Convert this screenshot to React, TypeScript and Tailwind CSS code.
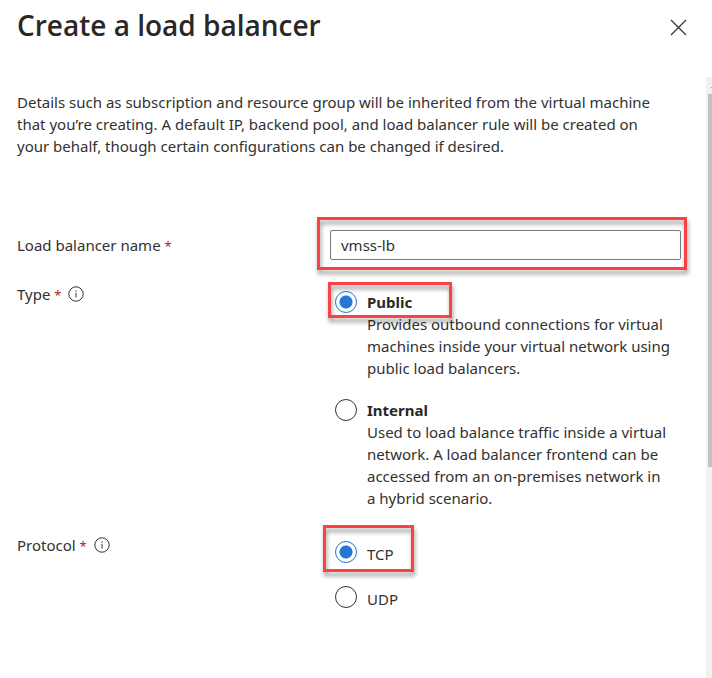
import React, { useState } from 'react';

interface Option {
  value: string;
  title: string;
  lines?: string[];
}

const types: Option[] = [
  {
    value: 'public',
    title: 'Public',
    lines: [
      'Provides outbound connections for virtual',
      'machines inside your virtual network using',
      'public load balancers.',
    ],
  },
  {
    value: 'internal',
    title: 'Internal',
    lines: [
      'Used to load balance traffic inside a virtual',
      'network. A load balancer frontend can be',
      'accessed from an on-premises network in',
      'a hybrid scenario.',
    ],
  },
];

const protocols: Option[] = [
  { value: 'tcp', title: 'TCP' },
  { value: 'udp', title: 'UDP' },
];

const radioClass =
  'size-[22px] shrink-0 appearance-none rounded-full border border-[#323130] bg-white checked:border-[#1f77d0] checked:bg-[radial-gradient(circle,#2678d4_6px,transparent_7px)]';

const Required: React.FC = () => <span className="text-[13px] text-[#a4262c]">*</span>;

const InfoIcon: React.FC = () => (
  <svg width="16" height="16" viewBox="0 0 16 16" fill="none" aria-hidden="true">
    <circle cx="8" cy="8" r="7.2" stroke="#323130" strokeWidth="1" />
    <path d="M8 6.8v4.7" stroke="#323130" strokeWidth="1" />
    <circle cx="8" cy="5" r="0.7" fill="#323130" />
  </svg>
);

// Red callout frame drawn over the control it surrounds
const Callout: React.FC<{ className: string }> = ({ className }) => (
  <div
    className={`pointer-events-none absolute border-3 border-[#fa4144] drop-shadow-[1px_4px_2px_rgba(0,0,0,0.4)] ${className}`}
  />
);

const App: React.FC = () => {
  const [name, setName] = useState('vmss-lb');
  const [type, setType] = useState('public');
  const [protocol, setProtocol] = useState('tcp');

  return (
    <div className="flex min-h-screen flex-col bg-white font-['Noto_Sans','Segoe_UI',sans-serif] text-[15px] leading-[22px] text-[#323130]">
      <header className="flex h-[77px] items-start justify-between pl-[17px] pr-[25px]">
        <h1 className="pt-[3px] font-['Open_Sans','Segoe_UI',sans-serif] text-[28px] leading-[44px] font-semibold text-[#292827]">
          Create a load balancer
        </h1>
        <button type="button" aria-label="Close" className="mt-[19px]">
          <svg width="17" height="17" viewBox="0 0 17 17" fill="none" aria-hidden="true">
            <path d="M1 1l15 15M16 1L1 16" stroke="#323130" strokeWidth="1.2" />
          </svg>
        </button>
      </header>

      <div className="flex flex-1">
        <main className="flex-1 pt-[14px] pr-[25px] pl-[17px]">
          <p>
            Details such as subscription and resource group will be inherited from the virtual machine
            <br />
            that you’re creating. A default IP, backend pool, and load balancer rule will be created on
            <br />
            your behalf, though certain configurations can be changed if desired.
          </p>

          <form className="mt-[73px]">
            <div className="grid grid-cols-[313px_1fr] items-center">
              <label htmlFor="lb-name">
                Load balancer name <Required />
              </label>
              <div className="relative">
                <input
                  id="lb-name"
                  type="text"
                  value={name}
                  onChange={(e) => setName(e.target.value)}
                  className="block h-[30px] w-full rounded-xs border border-[#7a7876] px-[10px] outline-none"
                />
                <Callout className="-top-[13px] -right-[6px] -bottom-[10px] -left-[13px]" />
              </div>
            </div>

            <div role="radiogroup" aria-labelledby="type-label" className="mt-[23px] grid grid-cols-[313px_1fr]">
              <div id="type-label" className="flex h-[22px] items-center gap-[7px]">
                <span>
                  Type <Required />
                </span>
                <InfoIcon />
              </div>
              <div className="flex flex-col gap-5 pt-2 pl-[5px]">
                {types.map((option) => (
                  <label key={option.value} className="relative flex items-start gap-[10px]">
                    <input
                      type="radio"
                      name="type"
                      value={option.value}
                      checked={type === option.value}
                      onChange={() => setType(option.value)}
                      className={radioClass}
                    />
                    <span>
                      <span className="block font-bold text-[#292827]">{option.title}</span>
                      {option.lines?.map((line) => (
                        <span key={line} className="block">
                          {line}
                        </span>
                      ))}
                    </span>
                    {option.value === 'public' && <Callout className="-top-[9px] -left-[7px] h-[36px] w-[124px]" />}
                  </label>
                ))}
              </div>
            </div>

            <div role="radiogroup" aria-labelledby="protocol-label" className="mt-[25px] grid grid-cols-[313px_1fr]">
              <div id="protocol-label" className="flex h-[22px] items-center gap-[7px]">
                <span>
                  Protocol <Required />
                </span>
                <InfoIcon />
              </div>
              <div className="flex flex-col gap-[23px] pt-[7px] pl-[5px]">
                {protocols.map((option) => (
                  <label key={option.value} className="relative flex h-[22px] items-start gap-[10px]">
                    <input
                      type="radio"
                      name="protocol"
                      value={option.value}
                      checked={protocol === option.value}
                      onChange={() => setProtocol(option.value)}
                      className={radioClass}
                    />
                    <span className="pt-[2px]">{option.title}</span>
                    {option.value === 'tcp' && <Callout className="-top-[16px] -left-[12px] h-[47px] w-[91px]" />}
                  </label>
                ))}
              </div>
            </div>
          </form>
        </main>

        {/* Scroll track */}
        <div className="flex w-[6px] flex-col items-end bg-[#f1f1f1] pt-[10px]">
          <div className="mb-[6px] h-px w-px bg-[#a3a3a3]" />
          <div className="h-[373px] w-1 bg-[#c1c1c1]" />
        </div>
      </div>
    </div>
  );
};

export default App;
